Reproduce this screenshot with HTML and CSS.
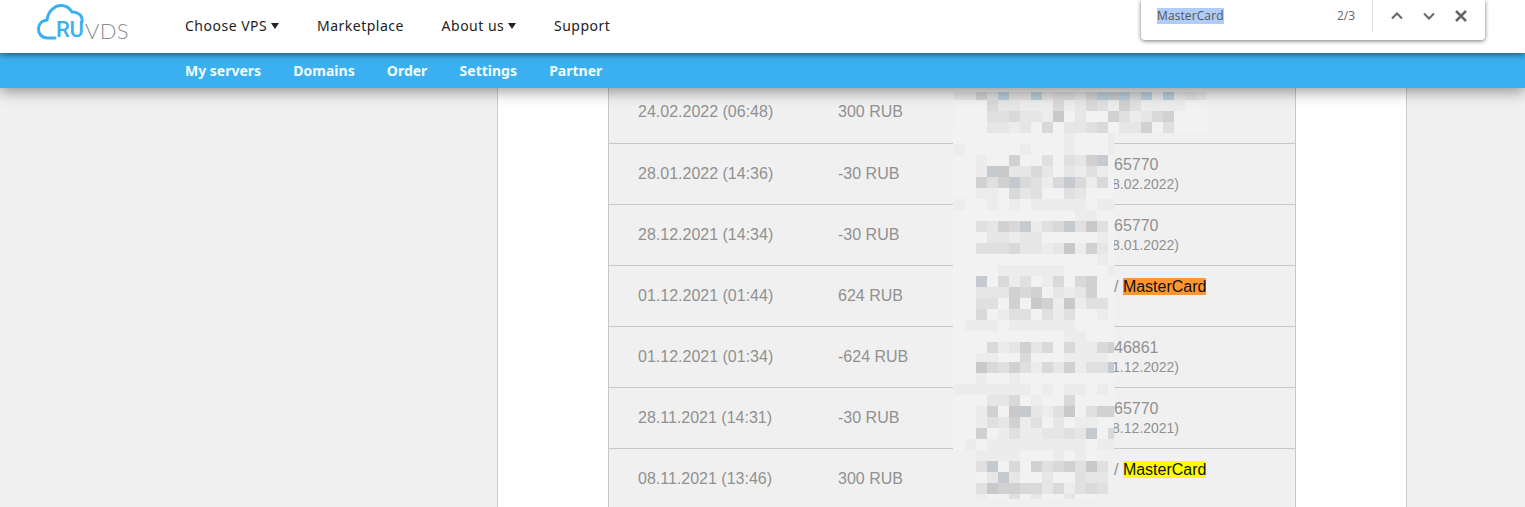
FILE: index.html
```html
<!DOCTYPE html>
<html lang="en">
<head>
<meta charset="utf-8">
<title>RuVDS</title>
<link rel="stylesheet" href="styles.css">
<script src="script.js" defer></script>
</head>
<body>
<header class="header">
  <div class="topbar">
    <a class="logo" href="#">
      <svg class="logo-cloud" width="50" height="40" viewBox="36 2 50 40"><path class="cloud-line" d="M55 38H47.5C41 38 38.5 33 38.5 29C38.5 24 42 20.5 47 20C48 11 55 5.5 61 5.5C66 5.5 70 8.5 72 12C77 11.5 83 15 82 22"/></svg>
      <span class="logo-ru">RU</span>
      <span class="logo-vds">VDS</span>
    </a>
    <nav class="mainnav">
      <a href="#">Choose VPS<i class="caret"></i></a>
      <a href="#">Marketplace</a>
      <a href="#">About us<i class="caret"></i></a>
      <a href="#">Support</a>
    </nav>
  </div>
  <nav class="subnav">
    <a href="#">My servers</a>
    <a href="#">Domains</a>
    <a href="#">Order</a>
    <a href="#">Settings</a>
    <a href="#">Partner</a>
  </nav>
</header>

<main class="column">
  <section class="ledger">
    <div class="row"><span class="date">24.02.2022 (06:48)</span><span class="amount">300 RUB</span><div class="info"></div></div>
    <div class="row"><span class="date">28.01.2022 (14:36)</span><span class="amount">-30 RUB</span><div class="info"><span>65770</span><small>8.02.2022)</small></div></div>
    <div class="row"><span class="date">28.12.2021 (14:34)</span><span class="amount">-30 RUB</span><div class="info"><span>65770</span><small>8.01.2022)</small></div></div>
    <div class="row"><span class="date">01.12.2021 (01:44)</span><span class="amount">624 RUB</span><div class="info"><span>/ <mark class="hit-active">MasterCard</mark></span></div></div>
    <div class="row"><span class="date">01.12.2021 (01:34)</span><span class="amount">-624 RUB</span><div class="info"><span>46861</span><small>1.12.2022)</small></div></div>
    <div class="row"><span class="date">28.11.2021 (14:31)</span><span class="amount">-30 RUB</span><div class="info"><span>65770</span><small>8.12.2021)</small></div></div>
    <div class="row"><span class="date">08.11.2021 (13:46)</span><span class="amount">300 RUB</span><div class="info"><span>/ <mark class="hit">MasterCard</mark></span></div></div>
    <svg id="mosaic" class="mosaic" width="254" height="412" viewBox="953 88 254 412"></svg>
  </section>
</main>

<div class="findbar">
  <span class="find-query"><span class="find-selected">MasterCard</span></span>
  <span class="find-count">2/3</span>
  <span class="find-divider"></span>
  <svg class="find-icon" width="16" height="16" viewBox="0 0 16 16"><path d="M3 10.5L8 5.5L13 10.5"/></svg>
  <svg class="find-icon" width="16" height="16" viewBox="0 0 16 16"><path d="M3 5.5L8 10.5L13 5.5"/></svg>
  <svg class="find-icon find-close" width="16" height="16" viewBox="0 0 16 16"><path d="M3 3L13 13M13 3L3 13"/></svg>
</div>
</body>
</html>
```
FILE: styles.css
```css
* { box-sizing: border-box; }
html, body { margin: 0; height: 507px; overflow: hidden; }
body { background: #f0f0f0; font-family: "Liberation Sans", Arial, sans-serif; position: relative; }
a { text-decoration: none; color: inherit; }

.header { position: relative; z-index: 5; box-shadow: 0 3px 14px rgba(0,0,0,.42); }
.topbar { height: 53px; background: #fff; display: flex; align-items: center; padding-left: 37px; position: relative; z-index: 1; box-shadow: 0 1px 7px rgba(0,0,0,.6); }
.logo { width: 148px; height: 53px; display: block; position: relative; flex: none; }
.logo-cloud { position: absolute; left: -1px; top: 2px; }
.cloud-line { fill: none; stroke: #3bb0f0; stroke-width: 3; stroke-linecap: round; }
.logo-ru { position: absolute; left: 19px; top: 18px; font: 500 22px/24px Roboto, sans-serif; color: #3bb0f0; letter-spacing: -.3px; }
.logo-vds { position: absolute; left: 48px; top: 18px; font: 300 22px/26px Lato, sans-serif; color: #8d8d8d; letter-spacing: .3px; }
.mainnav { display: flex; gap: 37.7px; font: 400 14px/20px "Noto Sans", sans-serif; color: #222; letter-spacing: .5px; margin-top: -2px; }
.mainnav a { display: flex; align-items: center; }
.caret { width: 0; height: 0; margin-left: 4px; border: 4px solid transparent; border-top: 6px solid #222; border-bottom: 0; }
.subnav { height: 35px; background: #3bb0f0; display: flex; align-items: center; gap: 32.2px; padding-left: 185px; font: 700 14px/20px "Noto Sans", sans-serif; color: #f4fbff; }

.column { display: flow-root; width: 910px; height: 419px; margin-left: 497px; background: #fff; border-left: 1px solid #ccc; border-right: 1px solid #ccc; padding-left: 110px; }
.ledger { position: relative; width: 688px; margin-top: -5px; background: #f0f0f0; border-left: 1px solid #c8c8c8; border-right: 1px solid #c8c8c8; color: #919191; font-size: 16px; }
.row { height: 61px; display: grid; grid-template-columns: 200px 275px 1fr; padding-left: 29px; border-bottom: 1px solid #c8c8c8; align-items: center; }
.row:first-child { padding-bottom: 2px; }
.info { align-self: start; padding-top: 11px; padding-left: 1px; display: flex; flex-direction: column; line-height: 19px; }
.info small { font-size: 14px; line-height: 20px; margin-left: -2px; }
mark { color: #111; }
.hit { background: #ff0; }
.hit-active { background: #ff9632; }
.mosaic { position: absolute; left: 344px; top: 5px; }
.s0 { fill: #f2f2f2; } .s1 { fill: #ececec; } .s2 { fill: #e6e6e6; } .s3 { fill: #e0e0e0; }
.s4 { fill: #d9d9d9; } .s5 { fill: #d1d1d1; } .s6 { fill: #c9c9c9; } .s7 { fill: #c5cad0; } .sb { fill: #b5cedb; }

.findbar { position: absolute; z-index: 9; left: 1141px; top: 0; width: 344px; height: 40px; background: #fff; border-radius: 0 0 4px 4px; box-shadow: 0 1px 4px rgba(0,0,0,.55); display: flex; align-items: flex-start; padding: 8px 16px 0; font: 400 12px/16px "Open Sans", sans-serif; color: #555; }
.find-query { flex: 1; letter-spacing: .1px; }
.find-selected { background: #b0cdf8; display: inline-block; height: 16px; }
.find-count { color: #666; margin-right: 17px; }
.find-divider { width: 1px; height: 32px; margin: -8px 16px 0 0; background: #ddd; }
.find-icon { margin-right: 16px; flex: none; }
.find-icon path { fill: none; stroke: #666; stroke-width: 2; }
.find-close path { stroke-width: 2.5; }
.find-close { margin-right: 0; }
```
FILE: script.js
```js
// Pixelated privacy mosaic: [top, height, first column, shades per cell]
var rows = [
  [92, 8, 0, "2253b33b34435b7b4b2b232"],
  [100, 11, 0, "000422111412431531111"],
  [111, 11, 0, "00033422160200531245"],
  [122, 11, 0, "00022120402234022503"],
  [133, 11, 0, "000000000010001"],
  [144, 11, 0, "100000100010001"],
  [155, 11, 0, "001005003032570"],
  [166, 11, 0, "00176224202131"],
  [177, 11, 0, "00535743147414"],
  [188, 11, 0, "00110423003200"],
  [199, 11, 0, "100101011111011"],
  [210, 11, 0, "000000000001100"],
  [221, 11, 0, "00325471347363"],
  [232, 11, 0, "00022122000001"],
  [243, 11, 0, "00333422126152"],
  [254, 11, 0, "00000000000001"],
  [265, 11, 0, "000011111100001"],
  [276, 11, 0, "00704130140450"],
  [287, 11, 0, "00222545021250"],
  [298, 11, 0, "00330506516133"],
  [309, 11, 0, "00401330313001"],
  [320, 11, 0, "011101111110000"],
  [331, 11, 0, "000000000011000"],
  [342, 11, 0, "000412524041145"],
  [353, 9, 0, "00110040001111"],
  [362, 11, 0, "006435314251337"],
  [373, 11, 0, "00100100000000"],
  [384, 11, 0, "11111110101101"],
  [395, 11, 0, "00022401004000"],
  [406, 11, 0, "001506721360355"],
  [417, 11, 0, "00132513020110"],
  [428, 11, 0, "005013112232704"],
  [439, 11, 0, "010111111111011"],
  [450, 11, 0, "00111100010100"],
  [461, 11, 0, "00370405345363"],
  [472, 11, 0, "00027200200322"],
  [483, 11, 0, "00365544241343"],
  [494, 5, 0, "00100302002000"]
];
var NS = "http://www.w3.org/2000/svg";
var svg = document.getElementById("mosaic");
function rect(x, y, w, h, shade) {
  var r = document.createElementNS(NS, "rect");
  r.setAttribute("x", x); r.setAttribute("y", y);
  r.setAttribute("width", w); r.setAttribute("height", h);
  r.setAttribute("class", "s" + shade);
  svg.appendChild(r);
}
rect(954, 92, 253, 41, "0");
rect(953, 133, 161, 317, "0");
rect(976, 450, 121, 49, "0");
rows.forEach(function (row) {
  for (var i = 0; i < row[3].length; i++) {
    var c = row[3].charAt(i);
    if (c === "0") continue;
    var x = 954 + 11 * i;
    var right = row[0] < 133 ? 1207 : 1114;
    rect(x, row[0], Math.min(11, right - x), row[1], c);
  }
});
```
